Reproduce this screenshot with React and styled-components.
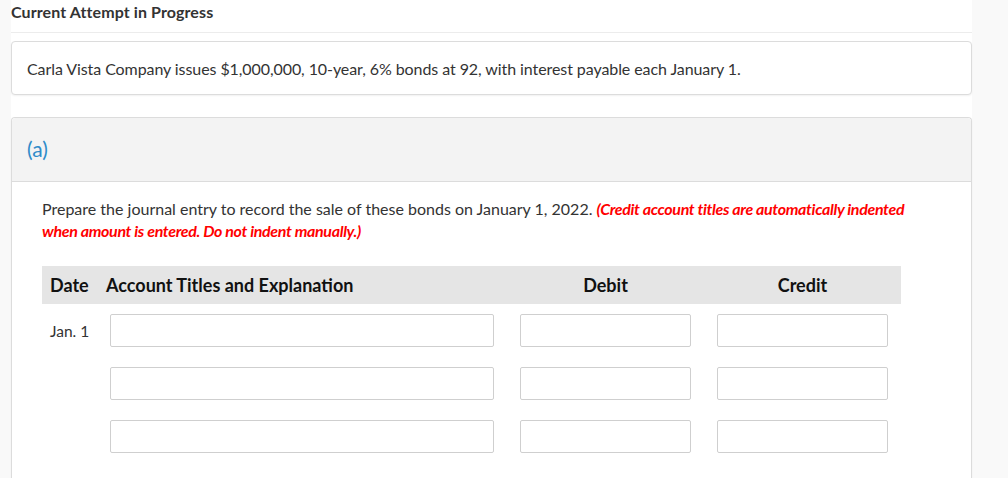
import React from 'react';
import styled, { createGlobalStyle } from 'styled-components';

const GlobalStyle = createGlobalStyle`
  html, body {
    margin: 0;
    padding: 0;
    background: #f9f9f9;
    font-family: Lato, "Open Sans", sans-serif;
    color: #333;
  }
`;

const Page = styled.div`
  width: 961px;
  margin-left: 11px;
  min-height: 478px;
  background: #fff;
`;

const TitleBar = styled.div`
  height: 33px;
  box-sizing: border-box;
  padding: 2px 0 0 0;
  font-size: 16px;
  font-weight: 700;
  line-height: 20px;
  letter-spacing: 0.1px;
  color: #333;
  border-bottom: 1px solid #ececec;
`;

const Card = styled.div`
  border: 1px solid #dcdcdc;
  border-radius: 4px;
  box-shadow: 0 1px 2px rgba(0, 0, 0, 0.06);
  background: #fff;
`;

const IntroCard = styled(Card)`
  margin-top: 8px;
  height: 54px;
  box-sizing: border-box;
  display: flex;
  align-items: center;
  padding: 0 15px;
  font-size: 16px;
  letter-spacing: -0.08px;
`;

const PartCard = styled(Card)`
  margin-top: 22px;
  border-bottom: none;
  border-radius: 4px 4px 0 0;
  min-height: 360px;
`;

const PartHeader = styled.div`
  height: 64px;
  box-sizing: border-box;
  display: flex;
  align-items: center;
  padding: 0 15px 2px;
  background: #f3f3f3;
  border-bottom: 1px solid #dcdcdc;
  border-radius: 4px 4px 0 0;
  font-size: 21px;
  color: #2e8bc9;
`;

const PartBody = styled.div`
  padding: 16px 50px 0 30px;
`;

const Instruction = styled.p`
  margin: 0;
  font-size: 16px;
  line-height: 22px;
  color: #333;
`;

const Emphasis = styled.span`
  color: #f00;
  font-weight: 700;
  font-style: italic;
  letter-spacing: -0.34px;
`;

const Journal = styled.div`
  margin-top: 24px;
  width: 859px;
  display: grid;
  grid-template-columns: 64px 401px 197px 197px;
`;

const HeadCell = styled.div`
  height: 38px;
  display: flex;
  align-items: center;
  justify-content: ${(p) => (p.center ? 'center' : 'flex-start')};
  padding-left: ${(p) => (p.pad ? '8px' : '0')};
  background: #e5e5e5;
  font-size: 18px;
  font-weight: 700;
  color: #111;
`;

const Cell = styled.div`
  display: flex;
  align-items: center;
  justify-content: ${(p) => (p.center ? 'center' : 'flex-start')};
  padding-left: ${(p) => p.pl || 0}px;
  margin-top: ${(p) => (p.first ? 10 : 20)}px;
  height: 33px;
`;

const DateText = styled.span`
  font-size: 15.5px;
  color: #333;
`;

const Field = styled.input`
  box-sizing: border-box;
  width: ${(p) => p.w}px;
  height: 33px;
  border: 1px solid #cfcfcf;
  border-radius: 2px;
  background: #fff;
  outline: none;
  font-family: inherit;
`;

const rows = [{ date: 'Jan. 1' }, { date: '' }, { date: '' }];

export default function App() {
  return (
    <>
      <GlobalStyle />
      <Page>
        <TitleBar>Current Attempt in Progress</TitleBar>
        <IntroCard>
          Carla Vista Company issues $1,000,000, 10-year, 6% bonds at 92, with interest payable each January 1.
        </IntroCard>
        <PartCard>
          <PartHeader>(a)</PartHeader>
          <PartBody>
            <Instruction>
              Prepare the journal entry to record the sale of these bonds on January 1, 2022.{' '}
              <Emphasis>
                (Credit account titles are automatically indented when amount is entered. Do not indent manually.)
              </Emphasis>
            </Instruction>
            <Journal>
              <HeadCell pad>Date</HeadCell>
              <HeadCell>Account Titles and Explanation</HeadCell>
              <HeadCell center>Debit</HeadCell>
              <HeadCell center>Credit</HeadCell>
              {rows.map((r, i) => (
                <React.Fragment key={i}>
                  <Cell first={i === 0} pl={8}>
                    <DateText>{r.date}</DateText>
                  </Cell>
                  <Cell first={i === 0} pl={4}>
                    <Field w={384} />
                  </Cell>
                  <Cell first={i === 0} center>
                    <Field w={171} />
                  </Cell>
                  <Cell first={i === 0} center>
                    <Field w={171} />
                  </Cell>
                </React.Fragment>
              ))}
            </Journal>
          </PartBody>
        </PartCard>
      </Page>
    </>
  );
}
